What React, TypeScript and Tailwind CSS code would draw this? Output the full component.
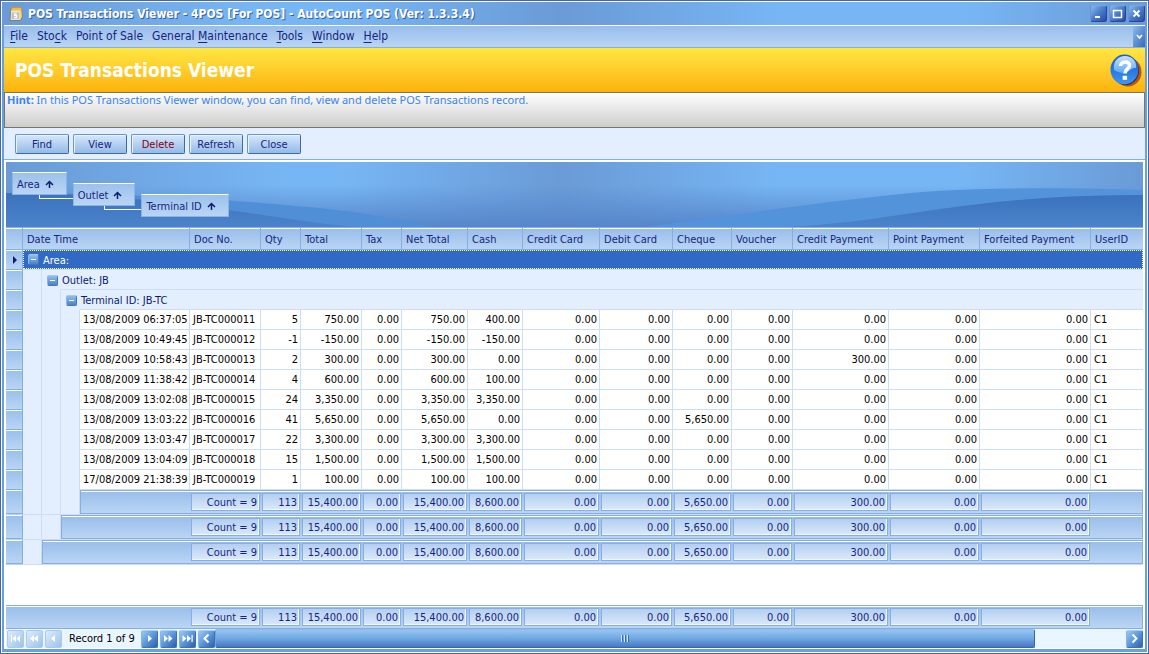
import { Fragment } from 'react'
import type { ReactNode } from 'react'
import clsx from 'clsx'

interface Transaction {
  date: string
  doc: string
  values: string[]
  user: string
}

// qty, total, tax, net total, cash, credit card, debit card, cheque, voucher, credit / point / forfeited payment
const row = (date: string, doc: string, qty: string, total: string, cash: string, cheque = '0.00', credit = '0.00'): Transaction => ({
  date,
  doc: `JB-TC0000${doc}`,
  values: [qty, total, '0.00', total, cash, '0.00', '0.00', cheque, '0.00', credit, '0.00', '0.00'],
  user: 'C1',
})

const transactions: Transaction[] = [
  row('13/08/2009 06:37:05', '11', '5', '750.00', '400.00'),
  row('13/08/2009 10:49:45', '12', '-1', '-150.00', '-150.00'),
  row('13/08/2009 10:58:43', '13', '2', '300.00', '0.00', '0.00', '300.00'),
  row('13/08/2009 11:38:42', '14', '4', '600.00', '100.00'),
  row('13/08/2009 13:02:08', '15', '24', '3,350.00', '3,350.00'),
  row('13/08/2009 13:03:22', '16', '41', '5,650.00', '0.00', '5,650.00'),
  row('13/08/2009 13:03:47', '17', '22', '3,300.00', '3,300.00'),
  row('13/08/2009 13:04:09', '18', '15', '1,500.00', '1,500.00'),
  row('17/08/2009 21:38:39', '19', '1', '100.00', '100.00'),
]

const summary = ['Count = 9', '113', '15,400.00', '0.00', '15,400.00', '8,600.00', '0.00', '0.00', '5,650.00', '0.00', '300.00', '0.00', '0.00']

const headers = [
  'Doc No.', 'Qty', 'Total', 'Tax', 'Net Total', 'Cash', 'Credit Card', 'Debit Card',
  'Cheque', 'Voucher', 'Credit Payment', 'Point Payment', 'Forfeited Payment', 'UserID',
]

const menus: [string, string, string][] = [
  ['', 'F', 'ile'],
  ['Sto', 'c', 'k'],
  ['Point of Sale', '', ''],
  ['General ', 'M', 'aintenance'],
  ['', 'T', 'ools'],
  ['', 'W', 'indow'],
  ['', 'H', 'elp'],
]

const actions = ['Find', 'View', 'Delete', 'Refresh', 'Close']

function Columns() {
  return (
    <colgroup>
      <col className="w-[17px]" />
      <col className="w-[19px]" />
      <col className="w-[19px]" />
      <col className="w-[19px]" />
      <col className="w-[110px]" />
      <col className="w-[71px]" />
      <col className="w-[40px]" />
      <col className="w-[61px]" />
      <col className="w-[40px]" />
      <col className="w-[66px]" />
      <col className="w-[55px]" />
      <col className="w-[77px]" />
      <col className="w-[73px]" />
      <col className="w-[59px]" />
      <col className="w-[61px]" />
      <col className="w-[96px]" />
      <col className="w-[91px]" />
      <col className="w-[111px]" />
      <col />
    </colgroup>
  )
}

function AppIcon() {
  return (
    <svg width="16" height="16" viewBox="0 0 16 16" aria-hidden="true">
      <path d="M4 1.500h9.500l.5 9.500-1.500 3.500H2l.5-9z" fill="#ece7dc" stroke="#7a6a50" strokeWidth=".8" />
      <path d="M4 1.500h9.500v3H3.300z" fill="#fbb832" />
      <path d="M4 6.500h7v6.500H3.500z" fill="#b9bcc2" />
      <path d="M8.800 7.800H6.500v1.800h2.300v2H6" fill="none" stroke="#fff" strokeWidth="1.200" />
      <path d="M11.500 5l2 .2.300 6-2.300 2.300z" fill="#fad357" />
    </svg>
  )
}

function HelpIcon() {
  return (
    <svg width="32" height="33" viewBox="0 0 32 33" aria-hidden="true">
      <defs>
        <linearGradient id="helpBall" x1="0" y1="0" x2="0" y2="1">
          <stop offset="0" stopColor="#1a5fc4" />
          <stop offset=".5" stopColor="#2676e0" />
          <stop offset="1" stopColor="#3f97f2" />
        </linearGradient>
        <linearGradient id="helpShine" x1="0" y1="0" x2="0" y2="1">
          <stop offset="0" stopColor="#c8e0fa" />
          <stop offset="1" stopColor="#5fa8f2" />
        </linearGradient>
      </defs>
      <ellipse cx="18" cy="18" rx="13.500" ry="14.500" fill="#b8560c" />
      <ellipse cx="15.500" cy="16.500" rx="13.500" ry="14.500" fill="#14225c" />
      <ellipse cx="14.500" cy="15.500" rx="14" ry="15" fill="url(#helpBall)" />
      <path d="M4 16C3 7 8 2 15 2s12 5 11 12c-5-1-7 5-12 5-4 0-7-1-10-3z" fill="url(#helpShine)" />
      <path d="M10.500 12c0-5 9-5.500 9-.5 0 3.500-4.500 3.500-4.500 8" fill="none" stroke="#fff" strokeWidth="3.600" />
      <rect x="12.700" y="21.800" width="4.400" height="4" fill="#fff" />
    </svg>
  )
}

const windowGlyphs = [
  { label: 'Minimize', glyph: <path d="M5 12h5" strokeWidth="2" /> },
  { label: 'Maximize', glyph: <path d="M4.500 5v7.500h8V5M4 5.500h9" strokeWidth="1.500" /> },
  { label: 'Close window', glyph: <path d="M5.500 5.500l6 6M11.500 5.500l-6 6" strokeWidth="2" /> },
]

function GlossButton({ label, disabled, children }: { label: string; disabled?: boolean; children: ReactNode }) {
  return (
    <button
      aria-label={label}
      disabled={disabled}
      className={clsx(
        'flex h-[18px] w-[17px] shrink-0 items-center justify-center rounded-[2px] border',
        disabled
          ? 'border-[#a9caee] bg-linear-to-br from-[#dcecfb] to-[#9cc2ea]'
          : 'border-[#3f6fb8] border-t-[#a8cdf3] border-l-[#86b4e6] bg-linear-to-br from-[#9cc8f4] via-[#5b97d8] to-[#2f5fae]',
      )}
    >
      <svg width="15" height="15" viewBox="0 0 15 15" fill="#fff" stroke="#fff" strokeWidth="0" aria-hidden="true">
        {children}
      </svg>
    </button>
  )
}

function CollapseButton({ label }: { label: string }) {
  return (
    <button
      aria-label={label}
      className="flex size-[11px] items-center justify-center rounded-[2px] border border-[#4678b8] border-t-[#a5c8ee] border-l-[#8db7e6] bg-linear-to-b from-[#8fbdf0] to-[#4d83c6]"
    >
      <span className="h-px w-[5px] bg-white" />
    </button>
  )
}

function RowIndicator({ current }: { current?: boolean }) {
  return (
    <td className="border-r border-b border-[#86ade4] bg-linear-to-b from-[#98bfeb] to-[#bad5f4] p-0 shadow-[inset_0_1px_0_#fff]">
      {current && (
        <svg width="16" height="18" viewBox="0 0 16 18" aria-label="Current row">
          <path d="M7 5l4 4-4 4z" fill="#101c6e" />
        </svg>
      )}
    </td>
  )
}

// blank tree-indent cells on the left of nested rows
function Indent({ count }: { count: number }) {
  return (
    <>
      {Array.from({ length: count }, (_, i) => (
        <td key={i} className="border-r border-[#cbdef6] bg-[#e3efff] p-0" />
      ))}
    </>
  )
}

function SummaryCells({ span, nested }: { span: number; nested?: boolean }) {
  const base = 'h-6 border-y border-[#86ade4] bg-linear-to-b from-[#98bdea] to-[#bad5f4] p-0 shadow-[inset_0_1px_0_#fff]'
  return (
    <>
      <td colSpan={span} className={clsx(base, nested && 'border-l')} />
      {summary.map((value, i) => (
        <td key={i} className={base}>
          <div className="mx-px h-[18px] border border-[#86ade4] bg-linear-to-b from-[#b3cff0] to-[#dbe9fa] pt-px pr-[2px] text-right leading-4 text-[#15257f] shadow-[inset_-1px_-1px_0_#f2f8ff]">
            {value}
          </div>
        </td>
      ))}
      <td className={clsx(base, 'border-r')} />
    </>
  )
}

function GroupChip({ name, className, link }: { name: string; className?: string; link?: boolean }) {
  return (
    <div className={clsx('relative', className)}>
      <button className="flex h-[23px] items-center gap-[5px] border border-[#8db2e4] border-t-white bg-linear-to-b from-[#9cc1ec] to-[#bad5f4] pt-0.5 pr-3 pl-1 text-[#15257f]">
        {name}
        <svg width="9" height="9" viewBox="0 0 9 9" fill="none" stroke="#101c6e" strokeWidth="1.500" aria-hidden="true">
          <path d="M4.500 8V1.500M1 5l3.500-3.500L8 5" />
        </svg>
      </button>
      {link && <span className="absolute top-full -right-1.5 left-1/2 h-1 border-b border-l border-white" />}
    </div>
  )
}

function GroupPanel() {
  return (
    <div className="relative h-[65px] shrink-0 overflow-hidden bg-[linear-gradient(to_right,#6a9bd6,#77b6f4_25%,#77b6f4_29%,#6a9bd6_49%,#77b6f4_68%,#77b6f4_84%,#6a9bd6)]">
      <svg className="absolute inset-0 size-full" viewBox="0 0 1137 65" preserveAspectRatio="none" aria-hidden="true">
        <defs>
          <linearGradient id="panelFade" x1="0" y1="0" x2="0" y2="1">
            <stop offset=".35" stopColor="#5686cb" stopOpacity="0" />
            <stop offset="1" stopColor="#5686cb" />
          </linearGradient>
          <linearGradient id="panelDeep" x1="0" y1="0" x2="0" y2="1">
            <stop offset="0" stopColor="#3a72bd" />
            <stop offset="1" stopColor="#4b84ca" />
          </linearGradient>
        </defs>
        <rect width="1137" height="65" fill="url(#panelFade)" />
        <path d="M0 31C120 31 230 38 314 46C360 51 395 58 430 65H0z" fill="#508fd6" />
        <path d="M0 31C100 31 180 42 250 52C290 58 310 61 350 65H0z" fill="url(#panelDeep)" />
        <path d="M640 65C750 50 850 35 930 29C1000 25 1080 26 1137 28V65z" fill="#5393da" />
        <path d="M780 65C860 61 900 50 990 40C1050 34 1100 33 1137 33V65z" fill="url(#panelDeep)" />
      </svg>
      <div className="relative flex items-start gap-1.5 pt-2.5 pl-1.5">
        <GroupChip name="Area" link />
        <GroupChip name="Outlet" className="mt-[11px]" link />
        <GroupChip name="Terminal ID" className="mt-[22px]" />
      </div>
    </div>
  )
}

function TransactionGrid() {
  const groupCell = 'h-5 border-b border-[#cbdef6] bg-[#e3efff] p-0 pt-0.5 pl-px text-left font-normal text-[#0b1a6b]'
  const cell = 'h-5 border-r border-b border-[#cbdef6] p-0 leading-4'
  return (
    <table className="w-full table-fixed border-separate border-spacing-0 whitespace-nowrap">
      <Columns />
      <thead>
        <tr className="text-left text-[#15257f]">
          {['', 'Date Time', ...headers].map((name, i) => (
            <th
              key={i}
              scope="col"
              colSpan={i === 1 ? 4 : 1}
              className={clsx(
                'h-[23px] border-y border-[#86ade4] bg-linear-to-b from-[#98bdea] to-[#bad5f4] p-0 pt-0.5 pl-1 font-normal shadow-[inset_0_1px_0_#fff]',
                i < 15 && 'border-r',
              )}
            >
              {name}
            </th>
          ))}
        </tr>
      </thead>
      <tbody>
        <tr>
          <RowIndicator current />
          <td colSpan={18} className="h-5 border-b border-[#cbdef6] bg-[#316ac5] p-0">
            <div className="flex h-[19px] items-center gap-1 border border-dotted border-white pl-1 text-white">
              <CollapseButton label="Collapse area" />
              <span className="pt-0.5">Area:</span>
            </div>
          </td>
        </tr>
        <tr>
          <RowIndicator />
          <Indent count={1} />
          <td className="bg-[#e3efff] p-0 pl-[5px]"><CollapseButton label="Collapse outlet" /></td>
          <td colSpan={16} className={groupCell}>Outlet: JB</td>
        </tr>
        <tr>
          <RowIndicator />
          <Indent count={2} />
          <td className="bg-[#e3efff] p-0 pl-[5px]"><CollapseButton label="Collapse terminal" /></td>
          <td colSpan={15} className={groupCell}>Terminal ID: JB-TC</td>
        </tr>
        {transactions.map((t) => (
          <tr key={t.doc} className="bg-white text-black">
            <RowIndicator />
            <Indent count={3} />
            <td className={clsx(cell, 'pl-[3px]')}>{t.date}</td>
            <td className={clsx(cell, 'pl-[3px]')}>{t.doc}</td>
            {t.values.map((value, i) => (
              <td key={i} className={clsx(cell, 'pr-[2px] text-right')}>{value}</td>
            ))}
            <td className="border-b border-[#cbdef6] p-0 pl-[3px] leading-4">{t.user}</td>
          </tr>
        ))}
        {[3, 2, 1].map((depth) => (
          <Fragment key={depth}>
            <tr>
              <RowIndicator />
              <Indent count={depth} />
              <SummaryCells span={4 - depth} nested />
            </tr>
            <tr>
              <td className="h-px bg-[#bad5f4] p-0" />
              <td colSpan={18} className="h-px bg-[#cbdef6] p-0" />
            </tr>
          </Fragment>
        ))}
      </tbody>
    </table>
  )
}

function Navigator() {
  return (
    <div className="flex h-[19px] shrink-0 items-center bg-[#e9f5ff]">
      <div className="flex items-center gap-0.5 pl-px">
        <GlossButton label="First record" disabled><path d="M3 4h1v7H3zM8 4v7L4.500 7.500zM12 4v7L8.500 7.500z" /></GlossButton>
        <GlossButton label="Previous page" disabled><path d="M7 4v7L3 7.500zM11 4v7L7 7.500z" /></GlossButton>
        <GlossButton label="Previous record" disabled><path d="M9 4v7L5 7.500z" /></GlossButton>
      </div>
      <span className="w-[79px] pt-px pl-[7px] whitespace-nowrap text-black">Record 1 of 9</span>
      <div className="flex items-center gap-0.5">
        <GlossButton label="Next record"><path d="M6 4v7l4-3.500z" /></GlossButton>
        <GlossButton label="Next page"><path d="M3 4v7l4-3.500zM7.500 4v7l4-3.500z" /></GlossButton>
        <GlossButton label="Last record"><path d="M2.500 4v7l4-3.500zM7 4v7l4-3.500zM11.500 4h1.200v7h-1.200z" /></GlossButton>
        <GlossButton label="Scroll left"><path d="M9.500 3.500L5.500 7.500l4 4" fill="none" strokeWidth="2" /></GlossButton>
      </div>
      <div className="h-full flex-1">
        <div
          role="scrollbar"
          aria-label="Horizontal scroll"
          aria-controls="grid"
          aria-valuenow={0}
          className="flex h-full w-[90%] items-center justify-center gap-px rounded-[2px] border border-[#3b62ae] border-t-[#8fbcec] border-l-[#6ea3de] bg-linear-to-b from-[#98c5f2] via-[#6fa7e2] to-[#4878c0]"
        >
          {[0, 1, 2].map((i) => (
            <span key={i} className="h-[7px] w-[2px] border-l border-[#d5e8fb] bg-[#3c69b4]" />
          ))}
        </div>
      </div>
      <GlossButton label="Scroll right"><path d="M5.500 3.500l4 4-4 4" fill="none" strokeWidth="2" /></GlossButton>
    </div>
  )
}

export default function App() {
  return (
    <div className="flex h-screen flex-col border border-[#4065b5] bg-white p-px font-['DejaVu_Sans_Condensed','Noto_Sans',sans-serif] text-[11px] leading-4">
      {/* Title bar */}
      <header className="flex h-[23px] shrink-0 items-center bg-[linear-gradient(to_right,#6a9bd6,#77b6f4_22%,#77b6f4_29%,#6a9bd6_49%,#77b6f4_68%,#77b6f4_84%,#6a9bd6)] pr-0.5 pl-1.5">
        <AppIcon />
        <h1 className="flex-1 pl-1 text-[12px] font-bold whitespace-nowrap text-white [text-shadow:1px_1px_0_#35609f]">
          POS Transactions Viewer - 4POS [For POS] - AutoCount POS (Ver: 1.3.3.4)
        </h1>
        <div className="flex gap-0.5">
          {windowGlyphs.map(({ label, glyph }) => (
            <button
              key={label}
              aria-label={label}
              className="size-[17px] rounded-[3px] border border-[#2644a0] border-t-[#7aa6de] border-l-[#6593d3] bg-linear-to-br from-[#8db9ec] via-[#4a7cc8] to-[#2a4ba8]"
            >
              <svg width="15" height="15" viewBox="1 1 15 15" fill="none" stroke="#fff" aria-hidden="true">{glyph}</svg>
            </button>
          ))}
        </div>
      </header>

      <div className="flex min-h-0 flex-1 flex-col border-x-2 border-b-3 border-[#6a9fdd]">
        {/* Menu */}
        <nav className="flex h-[23px] shrink-0 border-t border-b border-t-white border-b-[#86ade4] bg-linear-to-b from-[#98bdea] to-[#bad5f4]">
          <div className="flex flex-1 items-center gap-[9px] pb-0.5 pl-1.5 text-[12px] whitespace-nowrap text-[#15257f]">
            {menus.map(([before, key, after]) => (
              <button key={before + key + after}>
                {before}<span className="underline underline-offset-2">{key}</span>{after}
              </button>
            ))}
          </div>
          <button aria-label="More" className="flex w-3 items-center justify-center bg-linear-to-br from-[#8fbbec] to-[#3768b8]">
            <svg width="7" height="6" viewBox="0 0 7 6" fill="none" stroke="#fff" strokeWidth="1.500" aria-hidden="true">
              <path d="M1 1l2.500 3L6 1" />
            </svg>
          </button>
        </nav>

        {/* Banner */}
        <div className="flex h-11 shrink-0 items-center justify-between bg-linear-to-b from-[#ffe741] to-[#fcb206] pr-[3px] pl-[11px]">
          <h2 className="text-[19px] font-bold text-white">POS Transactions Viewer</h2>
          <button aria-label="Help"><HelpIcon /></button>
        </div>
        <p className="h-9 shrink-0 border border-[#75756a] bg-linear-to-b from-white to-[#cdcdcd] pl-0.5 font-['Noto_Sans',sans-serif] leading-[14px] text-[#3a85ee]">
          <b>Hint:</b> In this POS Transactions Viewer window, you can find, view and delete POS Transactions record.
        </p>

        {/* Actions */}
        <div className="flex h-8 shrink-0 items-center gap-1 bg-[#e3efff] pl-[11px]">
          {actions.map((name) => (
            <button
              key={name}
              className={clsx(
                'h-5 w-[54px] rounded-[2px] border border-[#6797d3] border-r-[#44699f] border-b-[#44699f] bg-linear-to-b from-[#d6e8fb] to-[#94bae8] pt-px shadow-[inset_1px_1px_0_#e9f4ff]',
                name === 'Delete' ? 'text-[#85000f]' : 'text-[#15257f]',
              )}
            >
              {name}
            </button>
          ))}
        </div>

        {/* Grid */}
        <main id="grid" className="flex min-h-0 flex-1 flex-col border-x-2 border-t-2 border-b border-white bg-white shadow-[0_-1px_0_#86ade4]">
          <GroupPanel />
          <div className="min-h-0 flex-1 overflow-hidden">
            <TransactionGrid />
          </div>
          <table className="w-full table-fixed border-separate border-spacing-0 whitespace-nowrap">
            <Columns />
            <tbody>
              <tr><SummaryCells span={5} /></tr>
            </tbody>
          </table>
          <Navigator />
        </main>
      </div>
    </div>
  )
}
